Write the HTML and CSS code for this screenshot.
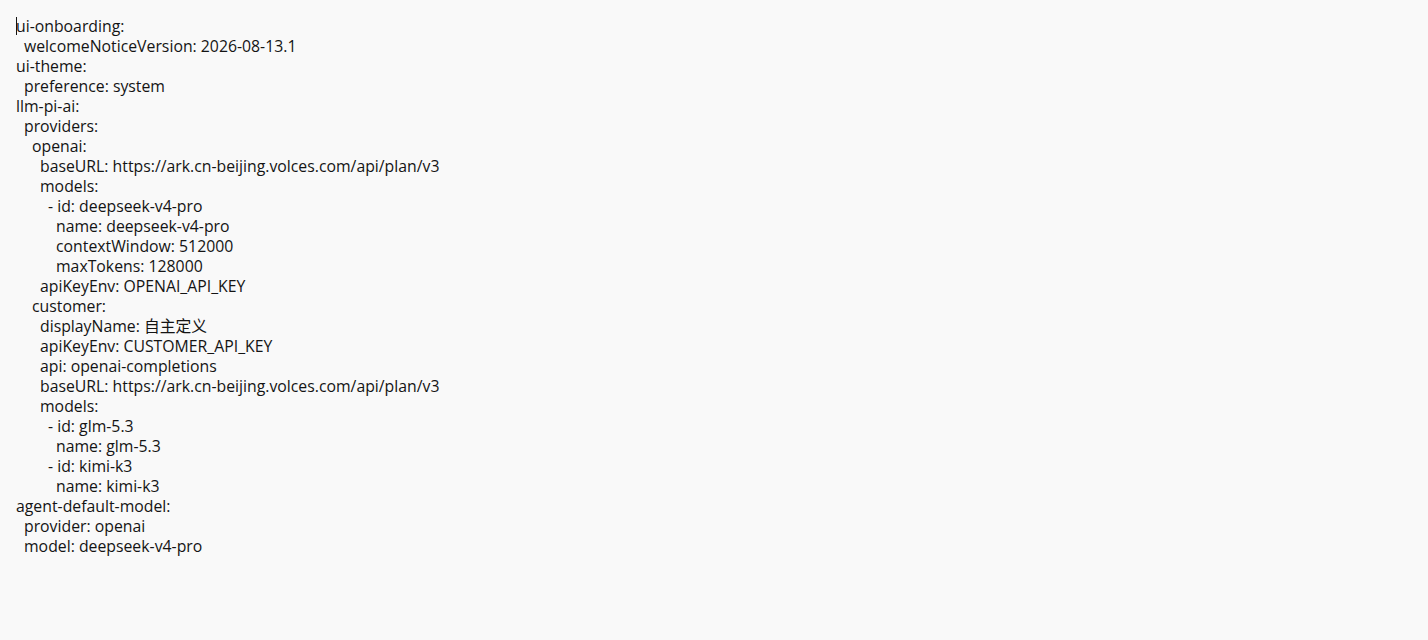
FILE: index.html
```html
<!DOCTYPE html>
<html lang="en">
<head>
<meta charset="utf-8">
<title>config.yaml</title>
<link rel="stylesheet" href="styles.css">
</head>
<body>
<div class="editor">
  <div class="code">
    <div class="line i0 caret">ui-onboarding:</div>
    <div class="line i1">welcomeNoticeVersion: 2026-08-13.1</div>
    <div class="line i0">ui-theme:</div>
    <div class="line i1">preference: system</div>
    <div class="line i0">llm-pi-ai:</div>
    <div class="line i1">providers:</div>
    <div class="line i2">openai:</div>
    <div class="line i3">baseURL: https://ark.cn-beijing.volces.com/api/plan/v3</div>
    <div class="line i3">models:</div>
    <div class="line i4">- id: deepseek-v4-pro</div>
    <div class="line i5">name: deepseek-v4-pro</div>
    <div class="line i5">contextWindow: 512000</div>
    <div class="line i5">maxTokens: 128000</div>
    <div class="line i3">apiKeyEnv: OPENAI_API_KEY</div>
    <div class="line i2">customer:</div>
    <div class="line i3">displayName: 自主定义</div>
    <div class="line i3">apiKeyEnv: CUSTOMER_API_KEY</div>
    <div class="line i3">api: openai-completions</div>
    <div class="line i3">baseURL: https://ark.cn-beijing.volces.com/api/plan/v3</div>
    <div class="line i3">models:</div>
    <div class="line i4">- id: glm-5.3</div>
    <div class="line i5">name: glm-5.3</div>
    <div class="line i4">- id: kimi-k3</div>
    <div class="line i5">name: kimi-k3</div>
    <div class="line i0">agent-default-model:</div>
    <div class="line i1">provider: openai</div>
    <div class="line i1">model: deepseek-v4-pro</div>
  </div>
</div>
</body>
</html>
```
FILE: styles.css
```css
html, body {
  margin: 0;
  padding: 0;
  background: #f9f9f9;
}
.editor {
  height: 640px;
  box-sizing: border-box;
  padding: 16px;
}
.code {
  font-family: "Open Sans", "Noto Sans CJK SC", sans-serif;
  font-size: 15.8px;
  line-height: 20px;
  color: #141414;
}
.line {
  white-space: pre;
  height: 20px;
}
.caret {
  position: relative;
}
.caret::before {
  content: "";
  position: absolute;
  left: 0;
  top: 1px;
  width: 1px;
  height: 18px;
  background: #141414;
}
.i1 { padding-left: 8px; }
.i2 { padding-left: 16px; }
.i3 { padding-left: 24px; }
.i4 { padding-left: 32px; }
.i5 { padding-left: 40px; }
```
